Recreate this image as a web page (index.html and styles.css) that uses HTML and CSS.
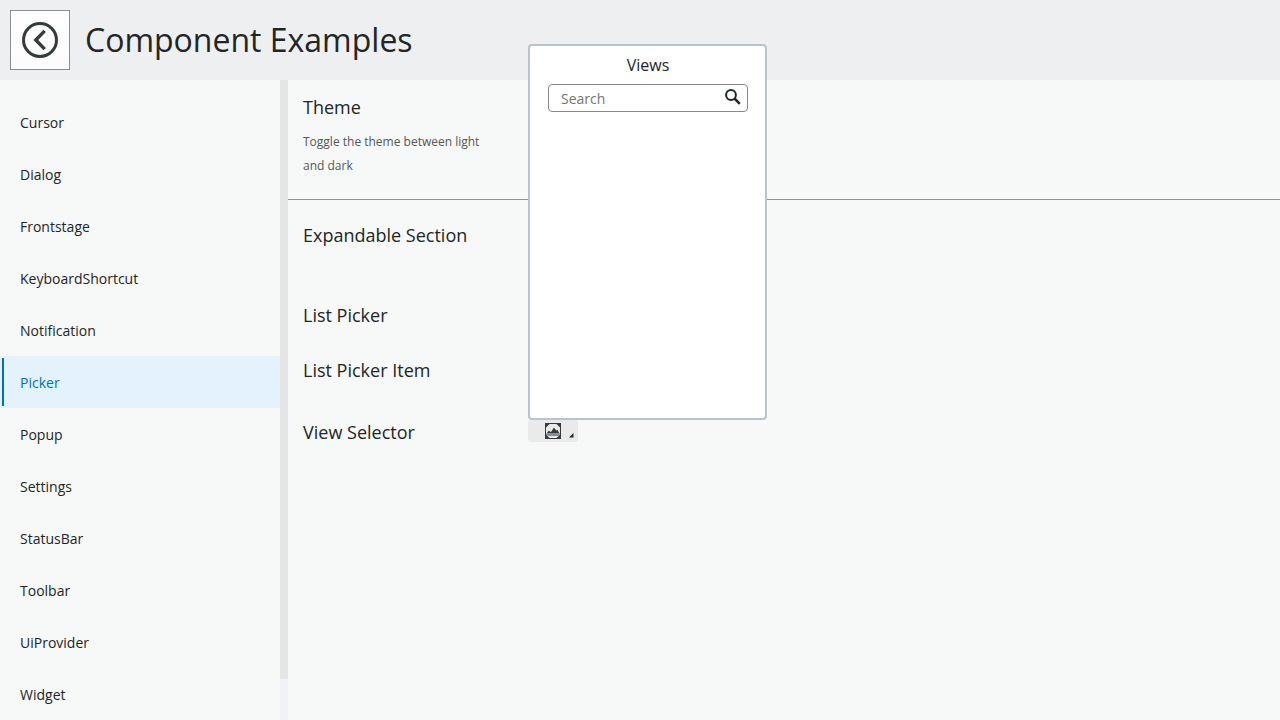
FILE: index.html
```html
<!DOCTYPE html>
<html lang="en">
<head>
<meta charset="utf-8">
<title>Component Examples</title>
<link rel="stylesheet" href="styles.css">
</head>
<body>
<header class="header">
  <button class="back" aria-label="Back">
    <svg width="36" height="36" viewBox="0 0 36 36" fill="none" stroke="#373a3b"><circle cx="18" cy="18" r="16.5" stroke-width="3"/><path d="M22.7 8.9 13.8 18l8.9 9.1" stroke-width="3.4"/></svg>
  </button>
  <h1 class="title">Component Examples</h1>
</header>
<div class="body">
  <nav class="nav">
    <a class="item">Cursor</a>
    <a class="item">Dialog</a>
    <a class="item">Frontstage</a>
    <a class="item">KeyboardShortcut</a>
    <a class="item">Notification</a>
    <a class="item active">Picker</a>
    <a class="item">Popup</a>
    <a class="item">Settings</a>
    <a class="item">StatusBar</a>
    <a class="item">Toolbar</a>
    <a class="item">UiProvider</a>
    <a class="item">Widget</a>
  </nav>
  <div class="scroll"><div class="thumb"></div></div>
  <main class="main">
    <section class="example theme">
      <h2 class="name">Theme</h2>
      <p class="desc">Toggle the theme between light and dark</p>
    </section>
    <section class="example expandable"><h2 class="name">Expandable Section</h2></section>
    <section class="example list"><h2 class="name">List Picker</h2></section>
    <section class="example list-item"><h2 class="name">List Picker Item</h2></section>
    <section class="example view">
      <h2 class="name">View Selector</h2>
      <button class="selector" aria-label="Views">
        <svg width="16" height="16" viewBox="0 0 16 16"><path fill="#373a3b" fill-rule="evenodd" d="M0 0h16v16H0zM4.500 1 1 4.500v7L4.500 15h7l3.500-3.500v-7L11.500 1z"/><path fill="#373a3b" d="M1.500 10.500 4 7.500l1.800 1.800L9 4.500l2.200 3 1-1 2.300 4z"/><path fill="#8b8e8f" d="M1 10.500h14v1.200L13.500 13h-11L1 11.700z"/></svg>
        <svg class="corner" width="5" height="5" viewBox="0 0 5 5"><path fill="#222526" d="M4.500 0v4.500H0z"/></svg>
      </button>
    </section>
  </main>
</div>
<div class="popup">
  <div class="popup-title">Views</div>
  <div class="search">
    <input class="field" type="text" placeholder="Search">
    <svg class="search-icon" width="16" height="16" viewBox="0 0 16 16" fill="none" stroke="#222526"><circle cx="6" cy="6" r="4.900" stroke-width="2"/><path d="m9.500 9.500 5.300 5.300" stroke-width="2.500"/></svg>
  </div>
</div>
</body>
</html>
```
FILE: styles.css
```css
* { box-sizing: border-box; }
body { margin: 0; height: 720px; overflow: hidden; display: flex; flex-direction: column; background: #f7f9f8; color: #222526; font-family: "Open Sans", sans-serif; font-size: 14px; }
h1, h2, p { margin: 0; font-weight: 400; }
svg { display: block; }
.header { height: 80px; flex: none; display: flex; align-items: center; gap: 15px; padding: 0 10px; background: #eeeff1; }
.back { width: 60px; height: 60px; padding: 0; display: flex; align-items: center; justify-content: center; border: 1px solid #8b8e90; background: linear-gradient(#fff, #fbfbfb); }
.title { font-size: 32px; line-height: 48px; }
.body { flex: 1; min-height: 0; display: flex; }
.nav { width: 280px; padding-top: 16px; display: flex; flex-direction: column; }
.item { height: 52px; flex: none; display: flex; align-items: center; padding: 2px 16px; }
.item::before { content: ""; width: 2px; height: 48px; margin: 0 16px 0 -14px; }
.active { background: #e3f2fd; color: #0072b8; }
.active::before { background: #0072b8; }
.scroll { width: 8px; background: #f0f2f3; }
.thumb { height: 599px; background: #e4e6e6; }
.main { flex: 1; }
.example { padding-left: 15px; }
.name { width: 225px; font-size: 18px; line-height: 24px; }
.theme { height: 120px; padding-top: 15px; border-bottom: 1px solid #8e9293; margin-bottom: 23px; }
.desc { width: 195px; margin-top: 11px; font-size: 12px; line-height: 24px; color: #545758; }
.expandable { height: 80px; }
.list { height: 55px; }
.list-item { height: 62px; }
.view { display: flex; align-items: flex-start; }
.selector { width: 50px; height: 22px; padding: 0; display: flex; align-items: center; justify-content: center; border: 0; border-radius: 3px; background: #e9ebeb; position: relative; }
.corner { position: absolute; right: 4px; bottom: 4px; }
.popup { position: absolute; left: 528px; top: 43.5px; width: 239.4px; height: 376.5px; padding: 8.5px 17.4px 18px 18px; border: 2px solid #b8c4c9; border-radius: 4px; background: #fff; }
.popup-title { font-size: 16px; line-height: 22px; text-align: center; }
.search { height: 28px; margin-top: 8px; display: flex; align-items: center; padding: 0 6px 0 12px; border: 1px solid #86898a; border-radius: 4px; }
.field { flex: 1; min-width: 0; padding: 0; border: 0; outline: 0; background: none; font: 14px "Open Sans", sans-serif; }
.field::placeholder { color: #757575; }
.search-icon { margin-bottom: 2px; }
```
